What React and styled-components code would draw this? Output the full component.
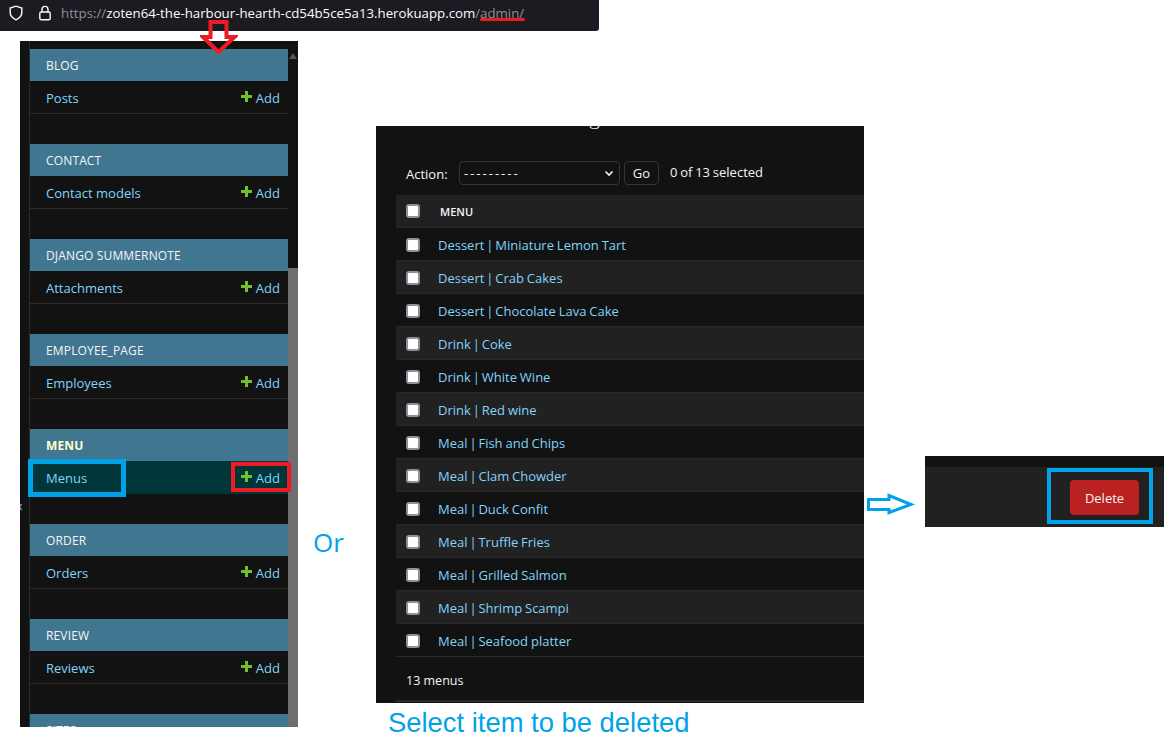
import styled, { createGlobalStyle } from "styled-components";

const uiFont = `"Open Sans", "Noto Sans", sans-serif`;
const link = "#81d4fa";
const annotationBlue = "#00a2e8";
const annotationRed = "#ed1c24";

const GlobalStyle = createGlobalStyle`
  html, body {
    margin: 0;
    padding: 0;
    background: #fff;
  }
`;

// the picture is a collage of cropped screenshots, so each crop sits free on the canvas
const Canvas = styled.div`
  position: relative;
  width: 1166px;
  height: 747px;
  overflow: hidden;
  background: #fff;
  font-family: ${uiFont};
  font-size: 13px;
`;

const Crop = styled.div`
  position: absolute;
  left: ${(p) => p.$x}px;
  top: ${(p) => p.$y}px;
  width: ${(p) => p.$w}px;
  height: ${(p) => p.$h}px;
  overflow: hidden;
`;

const AddressBar = styled(Crop)`
  display: flex;
  align-items: center;
  background: #1c1b22;
  border-bottom-right-radius: 3px;
  padding: 0 0 5px 8px;
  box-sizing: border-box;
`;

const BarIcon = styled.svg`
  width: 16px;
  height: 16px;
  margin-right: 13px;
  fill: none;
  stroke: #fbfbfe;
  stroke-width: 1.4;
  flex: none;
`;

const Url = styled.div`
  margin-left: -5px;
  font-size: 13.25px;
  color: #fbfbfe;
  white-space: nowrap;
`;

const UrlDim = styled.span`
  color: #8f8f94;
`;

const Sidebar = styled(Crop)`
  display: flex;
  background: #121212;
`;

const ToggleStrip = styled.div`
  position: relative;
  width: 9px;
  flex: none;
  border-right: 1px solid #2a2a2a;
`;

const ToggleGlyph = styled.span`
  position: absolute;
  left: -2px;
  top: 454px;
  font-size: 15px;
  color: ${link};
`;

const Nav = styled.div`
  width: 258px;
  flex: none;
  padding-top: 8px;
`;

const Section = styled.section`
  margin-bottom: 30px;
`;

const Caption = styled.div`
  height: 32px;
  display: flex;
  align-items: center;
  padding-left: 16px;
  background: #417690;
  color: ${(p) => (p.$active ? "#ffffcc" : "#f5f5f5")};
  font-size: 12px;
  font-weight: ${(p) => (p.$active ? 700 : 400)};
  letter-spacing: 0.15px;
`;

const NavRow = styled.div`
  height: 33px;
  box-sizing: border-box;
  display: flex;
  align-items: center;
  justify-content: space-between;
  padding: 1px 8px 0 16px;
  background: ${(p) => (p.$active ? "#00363a" : "transparent")};
  border-bottom: 1px solid ${(p) => (p.$active ? "#00363a" : "#2a2a2a")};
  color: ${link};
`;

const AddLink = styled.span`
  display: flex;
  align-items: center;
  gap: 4px;
`;

const PlusIcon = styled.svg`
  width: 11px;
  height: 11px;
  margin-top: -3px;
  fill: #70bf2b;
`;

const ScrollTrack = styled.div`
  position: relative;
  flex: 1;
`;

const ScrollThumb = styled.div`
  position: absolute;
  left: 0;
  right: 0;
  top: 227px;
  bottom: 0;
  background: #6f6e70;
`;

const ScrollArrow = styled.svg`
  position: absolute;
  left: 1px;
  top: 11px;
  width: 8px;
  height: 8px;
  fill: #555;
`;

const ListPanel = styled(Crop)`
  background: #121212;
  padding-left: 20px;
  box-sizing: border-box;
  color: #f5f5f5;
`;

const Heading = styled.h1`
  margin: -21px 0 0 10px;
  height: 24px;
  font-size: 20px;
  line-height: 24px;
  font-weight: 300;
  color: #f5f5f5;
`;

const Actions = styled.div`
  display: flex;
  align-items: center;
  height: 24px;
  margin-top: 32px;
  padding-left: 10px;
`;

const ActionLabel = styled.span`
  width: 53px;
  padding-top: 1px;
`;

const SelectBox = styled.div`
  width: 161px;
  height: 24px;
  box-sizing: border-box;
  display: flex;
  align-items: center;
  justify-content: space-between;
  padding: 0 4px 0 4px;
  border: 1px solid #353535;
  border-radius: 4px;
  background: #121212;
  color: #f5f5f5;
`;

const Dashes = styled.span`
  letter-spacing: 2px;
`;

const GoButton = styled.div`
  width: 35px;
  height: 24px;
  box-sizing: border-box;
  margin-left: 4px;
  display: flex;
  align-items: center;
  justify-content: center;
  border: 1px solid #353535;
  border-radius: 4px;
`;

const SelectedCount = styled.span`
  margin: -2px 0 0 11px;
  word-spacing: -0.6px;
`;

const Table = styled.div`
  margin-top: 10px;
`;

const TableRow = styled.div`
  height: 33px;
  box-sizing: border-box;
  display: flex;
  align-items: center;
  padding: ${(p) => (p.$head ? "0" : "2px")} 0 0 10px;
  background: ${(p) => (p.$shaded ? "#212121" : "#121212")};
  border-bottom: 1px solid #2a2a2a;
`;

const Tick = styled.input.attrs({ type: "checkbox" })`
  appearance: none;
  width: 14px;
  height: 14px;
  margin: 0 18px 0 0;
  box-sizing: border-box;
  background: #fff;
  border: 2px solid #8f8f9d;
  border-radius: 3px;
`;

const HeaderLabel = styled.span`
  margin-left: 2px;
  font-size: 11px;
  font-weight: 600;
  color: #f5f5f5;
`;

const ItemLink = styled.span`
  color: ${link};
  word-spacing: -0.5px;
  white-space: pre;
`;

const Pipe = styled.span`
  margin: 0 -1px;
`;

const Footer = styled.div`
  height: 45px;
  box-sizing: border-box;
  display: flex;
  align-items: center;
  padding: 4px 0 0 10px;
  border-bottom: 2px solid #2a2a2a;
  font-size: 12.5px;
`;

const DeletePanel = styled(Crop)`
  display: flex;
  flex-direction: column;
  background: #121212;
`;

const DeleteBar = styled.div`
  margin-top: 11px;
  flex: 1;
  display: flex;
  align-items: center;
  justify-content: flex-end;
  padding: 1px 25px 0 0;
  background: #212121;
`;

const DeleteButton = styled.div`
  width: 69px;
  height: 35px;
  display: flex;
  align-items: center;
  justify-content: center;
  border-radius: 4px;
  background: #ba2121;
  color: #f5f5f5;
`;

const Mark = styled.div`
  position: absolute;
  left: ${(p) => p.$x}px;
  top: ${(p) => p.$y}px;
  width: ${(p) => p.$w}px;
  height: ${(p) => p.$h}px;
  box-sizing: border-box;
  border: ${(p) => p.$line}px solid ${(p) => p.$color};
`;

const Underline = styled.div`
  position: absolute;
  left: 480px;
  top: 18px;
  width: 45px;
  height: 3px;
  border-radius: 2px;
  background: ${annotationRed};
`;

const ArrowSvg = styled.svg`
  position: absolute;
  left: ${(p) => p.$x}px;
  top: ${(p) => p.$y}px;
  fill: none;
`;

const Note = styled.div`
  position: absolute;
  left: ${(p) => p.$x}px;
  top: ${(p) => p.$y}px;
  color: ${annotationBlue};
  font-family: ${(p) => p.$font};
  font-size: ${(p) => p.$size}px;
  line-height: 1.2;
  white-space: nowrap;
`;

const sections = [
  { title: "BLOG", row: "Posts" },
  { title: "CONTACT", row: "Contact models" },
  { title: "DJANGO SUMMERNOTE", row: "Attachments" },
  { title: "EMPLOYEE_PAGE", row: "Employees" },
  { title: "MENU", row: "Menus", active: true },
  { title: "ORDER", row: "Orders" },
  { title: "REVIEW", row: "Reviews" },
  { title: "SITES" },
];

const menus = [
  ["Dessert", "Miniature Lemon Tart"],
  ["Dessert", "Crab Cakes"],
  ["Dessert", "Chocolate Lava Cake"],
  ["Drink", "Coke"],
  ["Drink", "White Wine"],
  ["Drink", "Red wine"],
  ["Meal", "Fish and Chips"],
  ["Meal", "Clam Chowder"],
  ["Meal", "Duck Confit"],
  ["Meal", "Truffle Fries"],
  ["Meal", "Grilled Salmon"],
  ["Meal", "Shrimp Scampi"],
  ["Meal", "Seafood platter"],
];

const Plus = () => (
  <PlusIcon viewBox="0 0 11 11">
    <path d="M4 0h3v4h4v3H7v4H4V7H0V4h4z" />
  </PlusIcon>
);

const App = () => {
  return (
    <Canvas>
      <GlobalStyle />

      <AddressBar $x={0} $y={0} $w={599} $h={31}>
        <BarIcon viewBox="0 0 16 16">
          <path d="M8 1.2 2.2 3v4.6c0 3.4 2.6 5.8 5.8 7.2 3.2-1.4 5.8-3.8 5.8-7.2V3z" />
        </BarIcon>
        <BarIcon viewBox="0 0 16 16">
          <rect x="2.8" y="7" width="10.4" height="7.8" rx="1.5" />
          <path d="M5 7V4.4a3 3 0 0 1 6 0V7" />
        </BarIcon>
        <Url>
          <UrlDim>https://</UrlDim>
          zoten64-the-harbour-hearth-cd54b5ce5a13.herokuapp.com
          <UrlDim>/admin/</UrlDim>
        </Url>
      </AddressBar>

      <Sidebar $x={20} $y={41} $w={278} $h={686}>
        <ToggleStrip>
          <ToggleGlyph>‹</ToggleGlyph>
        </ToggleStrip>
        <Nav>
          {sections.map((section) => (
            <Section key={section.title}>
              <Caption $active={section.active}>{section.title}</Caption>
              {section.row && (
                <NavRow $active={section.active}>
                  {section.row}
                  <AddLink>
                    <Plus />
                    Add
                  </AddLink>
                </NavRow>
              )}
            </Section>
          ))}
        </Nav>
        <ScrollTrack>
          <ScrollArrow viewBox="0 0 8 8">
            <path d="M4 1 8 7H0z" />
          </ScrollArrow>
          <ScrollThumb />
        </ScrollTrack>
      </Sidebar>

      <ListPanel $x={376} $y={126} $w={488} $h={577}>
        <Heading>Select menu to change</Heading>
        <Actions>
          <ActionLabel>Action:</ActionLabel>
          <SelectBox>
            <Dashes>---------</Dashes>
            <svg width="12" height="12" viewBox="0 0 12 12" fill="none" stroke="#f5f5f5" strokeWidth="1.6">
              <path d="M2.5 4.5 6 8l3.5-3.5" />
            </svg>
          </SelectBox>
          <GoButton>Go</GoButton>
          <SelectedCount>0 of 13 selected</SelectedCount>
        </Actions>
        <Table>
          <TableRow $shaded $head>
            <Tick readOnly />
            <HeaderLabel>MENU</HeaderLabel>
          </TableRow>
          {menus.map(([kind, name], index) => (
            <TableRow key={name} $shaded={index % 2 === 1}>
              <Tick readOnly />
              <ItemLink>
                {kind} <Pipe>|</Pipe> {name}
              </ItemLink>
            </TableRow>
          ))}
        </Table>
        <Footer>13 menus</Footer>
      </ListPanel>

      <DeletePanel $x={925} $y={456} $w={239} $h={71}>
        <DeleteBar>
          <DeleteButton>Delete</DeleteButton>
        </DeleteBar>
      </DeletePanel>

      <Underline />
      <ArrowSvg $x={200} $y={19} width="38" height="37" viewBox="0 0 38 37">
        <path d="M10.5 3h16v15h8L18.5 33 3 18h7.5z" stroke={annotationRed} strokeWidth="4" />
      </ArrowSvg>
      <ArrowSvg $x={866} $y={493} width="50" height="22" viewBox="0 0 50 22">
        <path d="M2.5 6.5H23v-4L45 11.5 23 19.5v-3H2.5z" stroke={annotationBlue} strokeWidth="3" />
      </ArrowSvg>

      <Mark $x={28} $y={459} $w={98} $h={38} $line={5} $color={annotationBlue} />
      <Mark $x={231} $y={462} $w={60} $h={30} $line={4} $color={annotationRed} />
      <Mark $x={1047} $y={468} $w={106} $h={56} $line={4} $color={annotationBlue} />

      <Note $x={313} $y={527} $size={26} $font={uiFont}>Or</Note>
      <Note $x={388} $y={707} $size={27.4} $font={`"Liberation Sans", sans-serif`}>
        Select item to be deleted
      </Note>
    </Canvas>
  );
};

export default App;
